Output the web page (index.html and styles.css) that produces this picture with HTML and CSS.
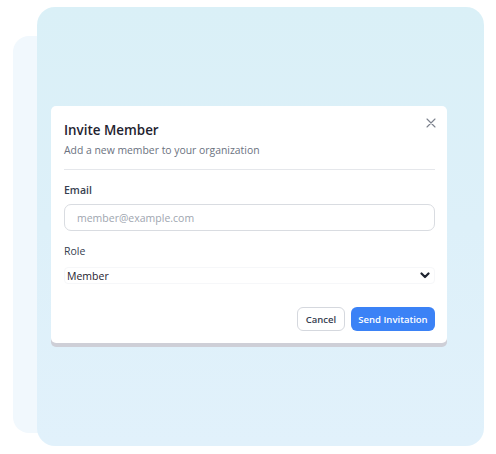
FILE: index.html
```html
<!DOCTYPE html>
<html>
<head>
<meta charset="utf-8">
<link rel="stylesheet" href="styles.css">
</head>
<body>
<div class="stage">
  <div class="back-card"></div>
  <div class="panel">
    <div class="dialog">
      <button class="close" aria-label="Close">
        <svg width="10" height="10" viewBox="0 0 10 10"><path d="M1 1L9 9M9 1L1 9" stroke="#7b818c" stroke-width="1.1" stroke-linecap="round"/></svg>
      </button>
      <h2 class="title">Invite Member</h2>
      <p class="subtitle">Add a new member to your organization</p>
      <div class="divider"></div>
      <label class="label">Email</label>
      <div class="input">member@example.com</div>
      <label class="label role-label">Role</label>
      <div class="select">
        <span>Member</span>
        <svg width="10" height="7" viewBox="0 0 10 7"><path d="M1.5 1.5L5 5L8.5 1.5" fill="none" stroke="#1f2430" stroke-width="2.2" stroke-linecap="round" stroke-linejoin="round"/></svg>
      </div>
      <div class="actions">
        <button class="btn cancel">Cancel</button>
        <button class="btn primary">Send Invitation</button>
      </div>
    </div>
  </div>
</div>
</body>
</html>
```
FILE: styles.css
```css
* { box-sizing: border-box; }
html, body { margin: 0; padding: 0; background: #ffffff; }
body { font-family: "Open Sans", "Noto Sans", sans-serif; width: 496px; height: 454px; overflow: hidden; }

.stage { position: relative; width: 496px; height: 454px; padding: 7px 12px 0 37px; }

.back-card {
  position: absolute;
  left: 13px; top: 36px;
  width: 120px; height: 397px;
  background: #f1f8fd;
  border-radius: 16px;
}

.panel {
  position: relative;
  width: 447px; height: 439px;
  border-radius: 18px;
  background: linear-gradient(180deg, #daf0f7 0%, #ddf0f9 50%, #e1f1fb 100%);
  padding: 99px 0 0 14px;
}

.dialog {
  position: relative;
  width: 396px;
  background: #ffffff;
  border-radius: 5px;
  padding: 15px 12px 12px 13px;
  box-shadow: 0 4px 0 #cecfd7;
}

.close {
  position: absolute;
  top: 10px; right: 9px;
  width: 14px; height: 14px;
  padding: 2px; border: 0; background: none;
  display: flex; align-items: center; justify-content: center;
}

.title {
  margin: 0;
  font-size: 13.4px; line-height: 18px;
  font-weight: 600; color: #1f2330;
}
.subtitle {
  margin: 3px 0 0;
  font-size: 10.4px; line-height: 16px;
  color: #6b7280;
}
.divider { height: 1px; background: #e5e7eb; margin-top: 11px; }

.label {
  display: block;
  margin-top: 12px;
  font-size: 10.5px; line-height: 16px;
  font-weight: 600; color: #374151;
}
.role-label { margin-top: 12px; font-weight: 500; }

.input {
  margin-top: 6px;
  height: 27px;
  border: 1px solid #d9dce1;
  border-radius: 7px;
  padding: 0 12px;
  display: flex; align-items: center;
  font-size: 10.5px; color: #a0a6b0;
}

.select {
  margin-top: 8px;
  height: 17px;
  border: 1px solid #f6f7f9;
  border-radius: 4px;
  padding: 0 4px 0 2px;
  display: flex; align-items: center; justify-content: space-between;
  font-size: 10.5px; color: #1f2330;
}

.actions { display: flex; justify-content: flex-end; gap: 6px; margin-top: 23px; }
.btn {
  height: 24px;
  border-radius: 6px;
  font-family: inherit;
  font-size: 9.5px; font-weight: 600;
  padding: 0;
  white-space: nowrap;
}
.cancel { background: #fff; border: 1px solid #d5d8de; color: #374151; width: 48px; }
.primary { background: #3b82f6; border: 0; color: #fff; width: 84px; }
```
